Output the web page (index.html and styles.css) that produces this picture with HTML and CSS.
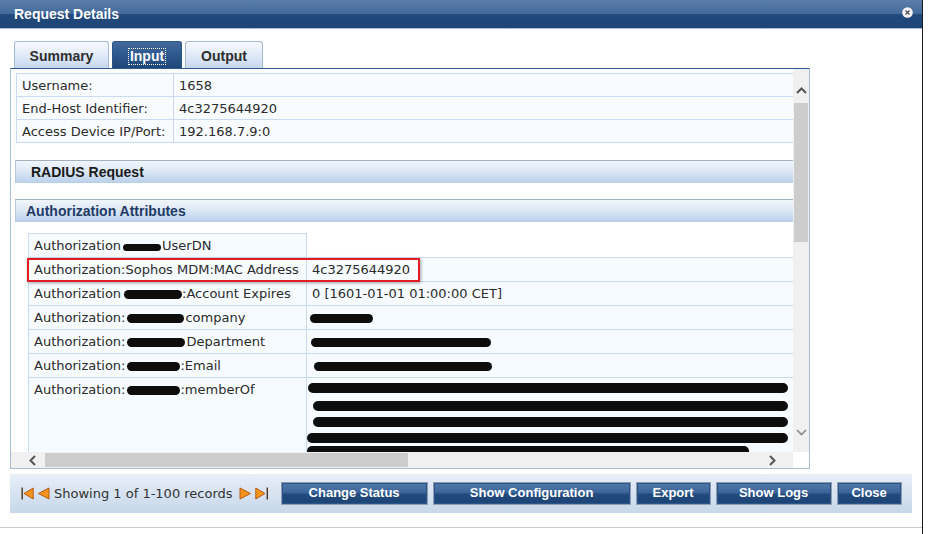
FILE: index.html
```html
<!DOCTYPE html>
<html>
<head>
<meta charset="utf-8">
<title>Request Details</title>
<link rel="stylesheet" href="styles.css">
</head>
<body>
<div class="window">
  <div class="titlebar">
    <span class="title">Request Details</span>
    <svg class="close" width="11" height="11" viewBox="0 0 11 11"><circle cx="5.5" cy="5.5" r="5.3" fill="#f4f4f4"/><path d="M3.5 3.5 L7.5 7.5 M7.5 3.5 L3.5 7.5" stroke="#555" stroke-width="1.4"/></svg>
  </div>

  <div class="tabs">
    <div class="tab tab-summary">Summary</div>
    <div class="tab tab-input active"><span class="focus">Input</span></div>
    <div class="tab tab-output">Output</div>
  </div>

  <div class="panel">
    <div class="viewport">
      <div class="content">
        <table class="info">
          <tr><td class="k">Username:</td><td>1658</td></tr>
          <tr><td class="k">End-Host Identifier:</td><td>4c3275644920</td></tr>
          <tr><td class="k">Access Device IP/Port:</td><td>192.168.7.9:0</td></tr>
        </table>

        <div class="sect sect-radius">RADIUS Request</div>
        <div class="sect sect-auth">Authorization Attributes</div>

        <table class="attrs">
          <tr class="r-first"><td class="k">Authorization<span class="blob b-a1"></span>UserDN</td><td class="empty"></td></tr>
          <tr><td class="k">Authorization:Sophos MDM:MAC Address</td><td>4c3275644920</td></tr>
          <tr><td class="k">Authorization<span class="blob b-a2"></span>:Account Expires</td><td>0 [1601-01-01 01:00:00 CET]</td></tr>
          <tr><td class="k">Authorization:<span class="blob b-a3"></span>company</td><td><span class="blob v-company"></span></td></tr>
          <tr><td class="k">Authorization:<span class="blob b-a4"></span>Department</td><td><span class="blob v-dept"></span></td></tr>
          <tr><td class="k">Authorization:<span class="blob b-a5"></span>:Email</td><td><span class="blob v-email"></span></td></tr>
          <tr class="r-member"><td class="k">Authorization:<span class="blob b-a5"></span>:memberOf</td>
            <td>
              <div class="line l1"></div>
              <div class="line l2"></div>
              <div class="line l3"></div>
              <div class="line l4"></div>
              <div class="line l5"></div>
            </td></tr>
        </table>

        <div class="highlight"></div>
      </div>
      <div class="vscroll">
        <div class="sb-btn sb-up"><svg width="11" height="7" viewBox="0 0 11 7"><path d="M1 6 L5.5 1.5 L10 6" fill="none" stroke="#555" stroke-width="2"/></svg></div>
        <div class="vthumb"></div>
        <div class="sb-fill"></div>
        <div class="sb-btn sb-down"><svg width="11" height="7" viewBox="0 0 11 7"><path d="M1 1 L5.5 5.5 L10 1" fill="none" stroke="#8a8a8a" stroke-width="1.6"/></svg></div>
      </div>
    </div>
    <div class="hscroll">
      <div class="hb hb-left"><svg width="7" height="11" viewBox="0 0 7 11"><path d="M6 1 L1.5 5.5 L6 10" fill="none" stroke="#555" stroke-width="2"/></svg></div>
      <div class="hthumb"></div>
      <div class="sb-fill"></div>
      <div class="hb hb-right"><svg width="7" height="11" viewBox="0 0 7 11"><path d="M1 1 L5.5 5.5 L1 10" fill="none" stroke="#555" stroke-width="2"/></svg></div>
      <div class="corner"></div>
    </div>
  </div>

  <div class="footer">
    <div class="pager">
      <svg width="13" height="13" viewBox="0 0 13 13"><rect x="0.5" y="0.5" width="1.4" height="12" fill="#4a3520"/><polygon points="12.2,1 3,6.5 12.2,12" fill="#f7941d" stroke="#b55a12" stroke-width="1"/></svg>
      <svg width="13" height="13" viewBox="0 0 13 13"><polygon points="12,1 1.5,6.5 12,12" fill="#f7941d" stroke="#b55a12" stroke-width="1"/></svg>
      <span class="pager-text">Showing 1 of 1-100 records</span>
      <svg width="13" height="13" viewBox="0 0 13 13"><polygon points="1,1 11.5,6.5 1,12" fill="#f7941d" stroke="#b55a12" stroke-width="1"/></svg>
      <svg width="14" height="13" viewBox="0 0 14 13"><polygon points="0.8,1 10,6.5 0.8,12" fill="#f7941d" stroke="#b55a12" stroke-width="1"/><rect x="11.6" y="0.5" width="1.4" height="12" fill="#4a3520"/></svg>
    </div>
    <div class="buttons">
      <button class="btn w-change">Change Status</button>
      <button class="btn w-config">Show Configuration</button>
      <button class="btn w-export">Export</button>
      <button class="btn w-logs">Show Logs</button>
      <button class="btn w-close">Close</button>
    </div>
  </div>

  <div class="sep"></div>
</div>
</body>
</html>
```

FILE: styles.css
```css
html, body {
  margin: 0;
  padding: 0;
}
body {
  width: 928px;
  height: 534px;
  background: #ffffff;
  font-family: "DejaVu Sans", Verdana, sans-serif;
  font-size: 13px;
  color: #2b2b2b;
  overflow: hidden;
}
.window {
  width: 922px;
  height: 534px;
  border-right: 1px solid #1c1c1c;
  display: flex;
  flex-direction: column;
}

/* title bar */
.titlebar {
  height: 28px;
  border-bottom: 1px solid #a9badb;
  background: linear-gradient(#5b7eab 0%, #42699a 50%, #22497b 52%, #1e4577 100%);
  display: flex;
  align-items: center;
  justify-content: space-between;
  padding: 0 9px 0 14px;
  flex: none;
}
.title {
  font: bold 14px "Liberation Sans", Arial, sans-serif;
  color: #ffffff;
}
.close {
  display: block;
  margin-top: -4px;
}

/* tabs */
.tabs {
  display: flex;
  gap: 3px;
  margin: 12px 0 0 14px;
  height: 27px;
  flex: none;
}
.tab {
  box-sizing: border-box;
  height: 27px;
  border: 1px solid #a6b9d4;
  border-bottom: none;
  border-radius: 3px 3px 0 0;
  background: linear-gradient(#f7f9fd 0%, #e3ecf8 45%, #c6d8ef 100%);
  font: bold 14px "Liberation Sans", Arial, sans-serif;
  color: #2e2e2e;
  display: flex;
  align-items: center;
  justify-content: center;
  padding-top: 2px;
}
.tab-summary { width: 95px; }
.tab-input { width: 70px; }
.tab-output { width: 78px; }
.tab.active {
  border-color: #2b5488;
  background: linear-gradient(#44699a 0%, #2f5a90 45%, #1f4779 100%);
  color: #ffffff;
}
.focus {
  outline: 1px dotted #ffffff;
  padding: 0 1px;
  line-height: 15px;
}

/* panel */
.panel {
  margin-left: 10px;
  width: 800px;
  height: 401px;
  box-sizing: border-box;
  border: 1px solid #aabcd6;
  border-top-color: #2e5b93;
  display: flex;
  flex-direction: column;
  flex: none;
  background: #ffffff;
}
.viewport {
  display: flex;
  height: 383px;
}
.content {
  flex: 1;
  position: relative;
  overflow: hidden;
  padding: 4px 0 0 4px;
}

.info {
  border-collapse: collapse;
  margin-left: 1px;
  width: 790px;
}
.info td {
  border: 1px solid #c9daf1;
  background: #f8fbff;
  height: 22px;
  padding: 0 0 0 5px;
  white-space: nowrap;
  vertical-align: middle;
}
.info td.k {
  width: 151px;
}

.sect {
  box-sizing: border-box;
  height: 23px;
  border-top: 1px solid #a3b0c0;
  border-left: 1px solid #b8c6d8;
  background: linear-gradient(#f2f6fc 0%, #dde8f5 45%, #b9cfea 100%);
  font: bold 14px "Liberation Sans", Arial, sans-serif;
  display: flex;
  align-items: center;
}
.sect-radius {
  margin-top: 17px;
  padding-left: 15px;
  color: #1b1b1b;
}
.sect-auth {
  margin-top: 16px;
  padding-left: 10px;
  color: #1f3b66;
}

.attrs {
  border-collapse: collapse;
  margin: 11px 0 0 13px;
  width: 775px;
}
.attrs td {
  border: 1px solid #c9daf1;
  background: #f6fbff;
  height: 23px;
  padding: 0 0 0 5px;
  white-space: nowrap;
  vertical-align: middle;
}
.attrs td.k {
  width: 272px;
}
.attrs td.empty {
  border: none;
  background: #ffffff;
}
.r-member td {
  vertical-align: top;
  padding-top: 4px;
  height: 80px;
}
.r-member td:last-child {
  padding: 0;
}

.blob {
  display: inline-block;
  height: 9px;
  border-radius: 5px;
  background: #0d0d0d;
  vertical-align: -1px;
}
.b-a1 { width: 38px; margin: 0 1px 0 2px; height: 7px; }
.b-a2 { width: 58px; margin: 0 0 0 3px; }
.b-a3 { width: 57px; margin: 0 1px 0 2px; }
.b-a4 { width: 58px; margin: 0 1px 0 2px; }
.b-a5 { width: 53px; margin: 0 0 0 2px; }
.v-company { width: 63px; margin-left: -2px; }
.v-dept { width: 180px; margin-left: -1px; }
.v-email { width: 178px; margin-left: 2px; }

.line {
  height: 10px;
  border-radius: 5px;
  background: #0d0d0d;
}
.l1 { margin: 5px 0 0 1px; width: 480px; }
.l2 { margin: 8px 0 0 6px; width: 475px; }
.l3 { margin: 6px 0 0 6px; width: 475px; }
.l4 { margin: 6px 0 0 0; width: 481px; }
.l5 { margin: 3px 0 0 0; width: 442px; }

.highlight {
  position: absolute;
  left: 16px;
  top: 189px;
  width: 393px;
  height: 24px;
  box-sizing: border-box;
  border: 2px solid #e31b23;
  box-shadow: 1px 1px 3px rgba(0, 0, 0, 0.35);
}

/* scrollbars */
.vscroll {
  width: 16px;
  background: #f0f0f0;
  display: flex;
  flex-direction: column;
  flex: none;
}
.sb-btn {
  height: 34px;
  display: flex;
  justify-content: center;
  box-sizing: border-box;
  flex: none;
}
.sb-up { padding-top: 18px; }
.sb-down { padding-top: 11px; }
.vthumb {
  height: 139px;
  margin: 0 1px;
  background: #cdcdcd;
  flex: none;
}
.sb-fill { flex: 1; }

.hscroll {
  height: 16px;
  background: #f0f0f0;
  display: flex;
  align-items: center;
  flex: none;
}
.hb {
  width: 34px;
  height: 16px;
  display: flex;
  align-items: center;
  box-sizing: border-box;
  flex: none;
}
.hb-left { padding-left: 18px; }
.hb-right { padding-left: 10px; }
.hthumb {
  width: 363px;
  height: 14px;
  background: #cdcdcd;
  flex: none;
}
.corner {
  width: 16px;
  height: 16px;
  background: #ffffff;
  flex: none;
}

/* footer */
.footer {
  margin: 5px 0 0 10px;
  width: 902px;
  height: 39px;
  background: linear-gradient(#e8eff8 0%, #d7e3f1 50%, #c7d7ea 100%);
  display: flex;
  align-items: center;
  padding-left: 11px;
  box-sizing: border-box;
  flex: none;
}
.pager {
  display: flex;
  align-items: center;
  gap: 3px;
}
.pager svg { display: block; }
.pager-text {
  margin: 0 3px 0 1px;
  color: #333333;
  white-space: nowrap;
}
.buttons {
  display: flex;
  gap: 4px;
  margin-left: 12px;
}
.btn {
  height: 23px;
  box-sizing: border-box;
  border: 1px solid #8e9bb0;
  background: linear-gradient(#557aa9 0%, #3a649a 45%, #21497b 55%, #1d4476 100%);
  box-shadow: inset 0 0 0 1px #2b5487;
  color: #ffffff;
  font: bold 13px "Liberation Sans", Arial, sans-serif;
  padding: 0 0 2px;
  margin: 0;
  cursor: pointer;
}
.w-change { width: 147px; }
.w-config { width: 198px; margin-left: 1px; }
.w-export { width: 75px; margin-left: 1px; }
.w-logs { width: 116px; margin-left: 1px; }
.w-close { width: 65px; margin-left: 1px; }

.sep {
  margin-top: 14px;
  height: 1px;
  background: #c9c9c9;
  flex: none;
}
```
